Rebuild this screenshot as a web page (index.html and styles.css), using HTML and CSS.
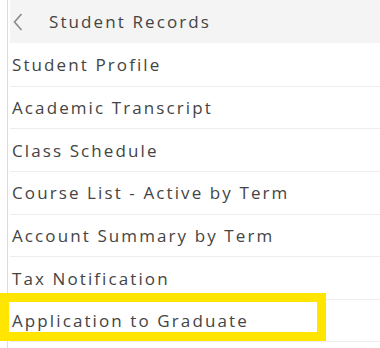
FILE: index.html
```html
<!DOCTYPE html>
<html lang="en">
<head>
  <meta charset="UTF-8" />
  <meta name="viewport" content="width=device-width, initial-scale=1" />
  <title>Student Records</title>
  <link rel="stylesheet" href="styles.css">
</head>
<body>
  <div class="panel">
    <!-- header -->
    <div class="panel-head">
      <svg class="back" width="10" height="18" viewBox="0 0 10 18">
        <path d="M8.5 1 L1.5 9 L8.5 17" fill="none" stroke="#8a8a8a" stroke-width="1.6" />
      </svg>
      <span class="title">Student Records</span>
    </div>

    <ul class="menu">
      <li>Student Profile</li>
      <li>Academic Transcript</li>
      <li>Class Schedule</li>
      <li>Course List - Active by Term</li>
      <li>Account Summary by Term</li>
      <li>Tax Notification</li>
      <li class="marked">Application to Graduate</li>
    </ul>
  </div>
</body>
</html>
```

FILE: styles.css
```css
body {
  margin: 0;
  font-family: 'Open Sans', sans-serif;
  background: #fff;
  color: #444;
  overflow: hidden;
}

.panel {
  margin-left: 7px;
  border-left: 1px solid #dcdcdc;
  padding-left: 2px;
  height: 348px;
  box-sizing: border-box;
}

.panel-head {
  height: 43px;
  background-color: #f4f4f4;
  display: flex;
  align-items: center;
  padding-left: 3px;
}

.back {
  margin-right: 26px;
}

.title {
  font-size: 17px;
  letter-spacing: 2.1px;
  color: #444;
}

.menu {
  list-style: none;
  margin: 0;
  padding: 0;
}

.menu li {
  height: 42.7px;
  box-sizing: border-box;
  border-top: 1px solid #eeeeee;
  display: flex;
  align-items: center;
  padding-left: 2px;
  font-size: 17px;
  letter-spacing: 2.1px;
  position: relative;
}

.menu li:first-child {
  border-top: none;
}

.menu li:last-child {
  border-bottom: 1px solid #eeeeee;
}

.marked::after {
  content: "";
  position: absolute;
  left: -10px;
  top: -7px;
  width: 308px;
  height: 30px;
  border: 9px solid #ffe500;
}
```
